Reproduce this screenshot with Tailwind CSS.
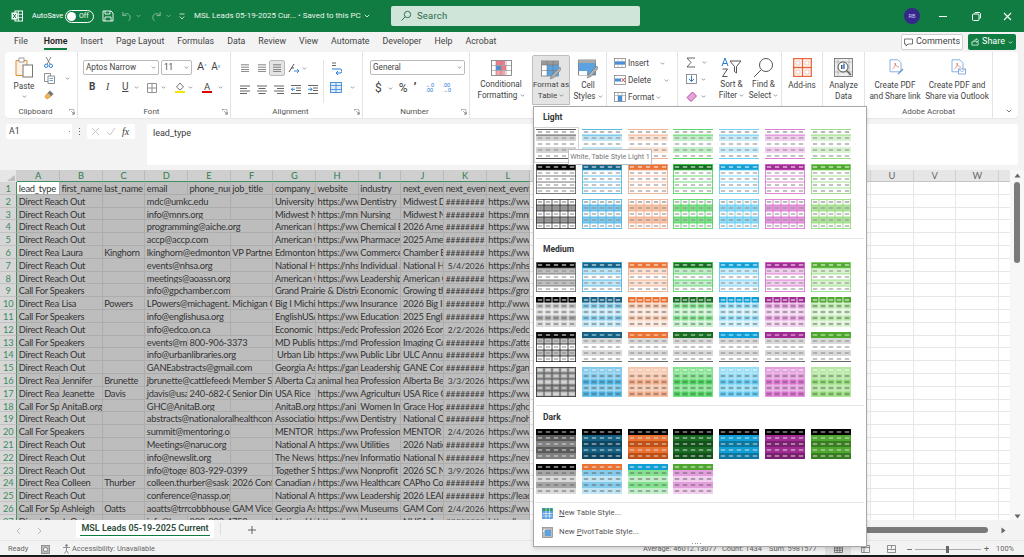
<!DOCTYPE html>
<html lang="en">
<head>
<meta charset="UTF-8">
<title>MSL Leads 05-19-2025 Current - Excel</title>
<script src="https://cdn.jsdelivr.net/npm/@tailwindcss/browser@4"></script>
</head>
<body class="relative w-[1024px] h-[557px] overflow-hidden flex flex-col bg-[#f3f3f3] text-[#3b3b3b] font-[Roboto,sans-serif]">

<svg class="hidden">
  <symbol id="chev" viewBox="0 0 6 4"><path d="M.8.8 3 3l2.2-2.2" fill="none" stroke="#666" stroke-width=".9"/></symbol>
  <symbol id="launch" viewBox="0 0 8 8"><path d="M.5.5h6v6M.5.5v2M.5.5h2" fill="none" stroke="#888" stroke-width=".8"/><path d="M3 3l3.5 3.5M4 7h3V4" fill="none" stroke="#555" stroke-width=".8"/></symbol>
  <symbol id="lines" viewBox="0 0 12 10"><path d="M1 1h10M1 4h10M1 7h10M1 9.500h10" stroke="#666" stroke-width="1" fill="none"/></symbol>
</svg>

<!-- title bar -->
<header class="h-[32px] shrink-0 flex items-center bg-[#107c41] text-white">
  <svg class="ml-[11px] w-[12px] h-[12px]" viewBox="0 0 12 12"><rect x="4" y="1" width="7.500" height="10" fill="none" stroke="#fff"/><path d="M7.500 1v10M4 4.300h7.500M4 7.600h7.500" stroke="#fff" stroke-width=".8"/><rect x=".5" y="2.500" width="6" height="7" fill="#fff"/><path d="M2 4l3 4M5 4 2 8" stroke="#107c41"/></svg>
  <span class="ml-[9px] text-[7.400px] w-[33px] whitespace-nowrap">AutoSave</span>
  <div class="w-[29px] h-[13px] rounded-full border border-white flex items-center pl-[1px]">
    <span class="w-[9px] h-[9px] rounded-full bg-white"></span><span class="ml-[3px] text-[7px]">Off</span>
  </div>
  <svg class="ml-[8px] w-[12px] h-[12px]" viewBox="0 0 12 12"><path d="M1 1h8l2 2v8H1z M3 1v3h5V1M3 11V7h6v4" fill="none" stroke="#fff" stroke-width=".9"/></svg>
  <svg class="ml-[7px] w-[11px] h-[11px] opacity-50" viewBox="0 0 12 12"><path d="M2 1v4h4M2 5c2-3 8-3 8 2 0 2-1 3-2 4" fill="none" stroke="#fff"/></svg>
  <svg class="ml-[4px] w-[5px] h-[4px] opacity-50" viewBox="0 0 6 4"><path d="M.8.8 3 3l2.200-2.200" fill="none" stroke="#fff"/></svg>
  <svg class="ml-[10px] w-[11px] h-[11px] opacity-50" viewBox="0 0 12 12"><path d="M10 1v4H6M10 5C8 2 2 2 2 7c0 2 1 3 2 4" fill="none" stroke="#fff"/></svg>
  <svg class="ml-[4px] w-[5px] h-[4px] opacity-50" viewBox="0 0 6 4"><path d="M.8.8 3 3l2.200-2.200" fill="none" stroke="#fff"/></svg>
  <svg class="ml-[8px] w-[6px] h-[7px] opacity-80" viewBox="0 0 6 7"><path d="M.5 1h5M.8 3.500 3 6l2.200-2.500" fill="none" stroke="#fff" stroke-width=".9"/></svg>
  <span class="ml-[9px] w-[197px] text-[8px] whitespace-nowrap flex items-center gap-[3px] text-[#e8f3ec]">MSL Leads 05-19-2025 Cur... &bull; Saved to this PC
    <svg class="w-[6px] h-[4px]" viewBox="0 0 6 4"><path d="M.8.8 3 3l2.200-2.200" fill="none" stroke="#fff" stroke-width=".8"/></svg>
  </span>
  <div class="w-[249px] h-[20px] bg-[#cfe5d9] rounded-[2px] flex items-center pl-[9px] text-[#2d6b4b] text-[9.500px]">
    <svg class="w-[12px] h-[12px]" viewBox="0 0 12 12"><circle cx="7.500" cy="4.500" r="3.200" fill="none" stroke="#3a7355"/><path d="M5 7 1.500 10.500" stroke="#3a7355"/></svg>
    <span class="ml-[5px] tracking-[0.2px]">Search</span>
  </div>
  <div class="ml-[264px] w-[16px] h-[16px] rounded-full bg-[#38278a] flex items-center justify-center text-[5.500px] text-[#cfc9ee]">RB</div>
  <span class="ml-[19px] w-[8px] h-[1px] bg-white"></span>
  <svg class="ml-[25px] w-[9px] h-[9px]" viewBox="0 0 9 9"><rect x=".5" y="2" width="6.500" height="6.500" rx="1" fill="none" stroke="#fff"/><path d="M2.500 1.500 3 .5h4.500l1 1V6L8 6.500" fill="none" stroke="#fff"/></svg>
  <svg class="ml-[22px] w-[9px] h-[9px]" viewBox="0 0 9 9"><path d="M1 1l7 7M8 1 1 8" stroke="#fff" stroke-width="1.100"/></svg>
</header>

<!-- ribbon tabs -->
<nav class="h-[20px] shrink-0 flex items-center text-[8.800px] text-[#444]">
  <span class="ml-[14px]">File</span>
  <span class="ml-[16px] relative font-semibold text-[#222]">Home<span class="absolute left-0 right-0 top-[13px] h-[2px] bg-[#107c41]"></span></span>
  <div class="ml-[13px] flex gap-[13px]">
    <span>Insert</span><span>Page Layout</span><span>Formulas</span><span>Data</span><span>Review</span><span>View</span><span>Automate</span><span>Developer</span><span>Help</span><span>Acrobat</span>
  </div>
  <div class="ml-auto flex items-center mr-[8px] gap-[5px]">
    <div class="w-[62px] h-[16px] bg-white border border-[#cfcfcf] rounded-[2px] flex items-center justify-center gap-[3px] text-[9px]">
      <svg class="w-[9px] h-[9px]" viewBox="0 0 9 9"><path d="M.5 1h8v5H4L2 8V6H.5z" fill="none" stroke="#555" stroke-width=".8"/></svg>Comments
    </div>
    <div class="w-[48px] h-[16px] bg-[#107c41] rounded-[2px] flex items-center justify-center gap-[3px] text-[9px] text-white">
      <svg class="w-[8px] h-[8px]" viewBox="0 0 9 9"><path d="M1 4v4h7V4M2 5c0-2 2-3 4-3V.8L8.500 3 6 5V3.600C4 3.500 3 4 2 5z" fill="none" stroke="#fff" stroke-width=".8"/></svg>Share
      <svg class="w-[5px] h-[3px]" viewBox="0 0 6 4"><path d="M.8.8 3 3l2.200-2.200" fill="none" stroke="#fff"/></svg>
    </div>
  </div>
</nav>

<!-- ribbon -->
<section class="h-[66px] shrink-0 mx-[5px] mr-[6px] bg-white rounded-[4px] flex text-[8.200px] leading-[10.500px] text-[#444] shadow-[0_1px_1px_#0000000d]">

  <!-- clipboard -->
  <div class="relative w-[73px] shrink-0 border-r border-[#e3e3e3] flex flex-col">
    <div class="flex-1 flex pt-[5px]">
      <div class="w-[36px] flex flex-col items-center pl-[2px]">
        <svg class="w-[20px] h-[21px]" viewBox="0 0 20 21"><path d="M2 3.500h11v15H2z" fill="#fdf2e4" stroke="#d98e3a"/><rect x="5" y="1" width="5" height="4" fill="#fff" stroke="#8a8a8a" stroke-width=".8"/><rect x="9" y="8" width="9.500" height="12" fill="#fff" stroke="#777"/></svg>
        <span class="mt-[3px]">Paste</span>
        <svg class="w-[5px] h-[3px] mt-[3px]"><use href="#chev"/></svg>
      </div>
      <div class="flex flex-col gap-[5px] ml-[3px]">
        <svg class="w-[9px] h-[11px]" viewBox="0 0 9 11"><path d="M2 0l4 7M7 0 3 7" stroke="#666" stroke-width=".8"/><circle cx="2.200" cy="8.800" r="1.700" fill="none" stroke="#2b7cd3"/><circle cx="6.800" cy="8.800" r="1.700" fill="none" stroke="#2b7cd3"/></svg>
        <div class="flex items-center"><svg class="w-[11px] h-[11px]" viewBox="0 0 11 11"><path d="M.5.500h6v8h-6z" fill="#fff" stroke="#777" stroke-width=".8"/><path d="M4 3h6.500v7.500H4z" fill="#fff" stroke="#777" stroke-width=".8"/><path d="M5.500 5.500h3.500M5.500 7.500h3.500" stroke="#2b7cd3" stroke-width=".7"/></svg><svg class="w-[5px] h-[3px] ml-[10px]"><use href="#chev"/></svg></div>
        <svg class="w-[11px] h-[11px]" viewBox="0 0 11 11"><path d="M6 1.500 9.500 5 7 7.500l-3.500-3.500z" fill="#777"/><path d="M3.500 4 .8 8l2 2L7 7.500" fill="#f2b25a" stroke="#d98e3a" stroke-width=".7"/></svg>
      </div>
    </div>
    <div class="h-[13px] text-center text-[8px] leading-[14px] text-[#555] pr-[11px]">Clipboard</div>
    <svg class="absolute right-[2px] bottom-[3px] w-[6px] h-[6px]"><use href="#launch"/></svg>
  </div>

  <!-- font -->
  <div class="relative w-[153px] shrink-0 border-r border-[#e3e3e3] flex flex-col pl-[5px]">
    <div class="flex items-center mt-[8px]">
      <div class="w-[76px] h-[15px] border border-[#bbb] rounded-[2px] flex items-center justify-between px-[2px]">Aptos Narrow<svg class="w-[5px] h-[3px]"><use href="#chev"/></svg></div>
      <div class="ml-[2px] w-[31px] h-[15px] border border-[#bbb] rounded-[2px] flex items-center justify-between px-[2px]">11<svg class="w-[5px] h-[3px]"><use href="#chev"/></svg></div>
      <span class="ml-[5px] text-[11px]">A<sup class="text-[5px] text-[#2b7cd3]">^</sup></span>
      <span class="ml-[5px] text-[10px]">A<sup class="text-[5px] text-[#2b7cd3]">v</sup></span>
    </div>
    <div class="flex items-center mt-[5px] h-[15px] text-[10px]">
      <span class="ml-[6px] w-[17px] font-bold">B</span>
      <span class="w-[16px] italic font-[Liberation_Serif,serif]">I</span>
      <span class="w-[12px] underline">U</span><svg class="w-[5px] h-[3px]"><use href="#chev"/></svg>
      <svg class="ml-[8px] w-[10px] h-[10px]" viewBox="0 0 10 10"><path d="M.5.500h9v9h-9zM5 .5v9M.5 5h9" fill="none" stroke="#777" stroke-width=".8"/></svg>
      <svg class="ml-[4px] w-[5px] h-[3px]"><use href="#chev"/></svg>
      <div class="ml-[9px] flex flex-col items-center"><svg class="w-[10px] h-[9px]" viewBox="0 0 10 9"><path d="M1.500 5 5 1l3.500 4L5 8z" fill="none" stroke="#555" stroke-width=".8"/></svg><span class="w-[10px] h-[2px] bg-[#f5e20a]"></span></div>
      <svg class="ml-[3px] w-[5px] h-[3px]"><use href="#chev"/></svg>
      <div class="ml-[9px] flex flex-col items-center leading-[9px] text-[9.500px]">A<span class="w-[10px] h-[2px] bg-[#e00000]"></span></div>
      <svg class="ml-[6px] w-[5px] h-[3px]"><use href="#chev"/></svg>
    </div>
    <div class="mt-auto h-[13px] text-center text-[8px] leading-[14px] text-[#555] pr-[10px]">Font</div>
    <svg class="absolute right-[2px] bottom-[3px] w-[6px] h-[6px]"><use href="#launch"/></svg>
  </div>

  <!-- alignment -->
  <div class="relative w-[132px] shrink-0 border-r border-[#e3e3e3] flex flex-col">
    <div class="flex flex-1 pt-[8px]">
      <div class="w-[93px] border-r border-[#e3e3e3] mb-[2px] pl-[9px]">
        <div class="flex items-center h-[16px]">
          <svg class="w-[10px] h-[8px]"><use href="#lines"/></svg>
          <svg class="ml-[7px] w-[10px] h-[8px]"><use href="#lines"/></svg>
          <div class="ml-[2px] w-[16px] h-[16px] bg-[#e4e4e4] border border-[#bbb] rounded-[2px] flex items-center justify-center"><svg class="w-[10px] h-[8px]"><use href="#lines"/></svg></div>
          <svg class="ml-[3px] w-[12px] h-[11px]" viewBox="0 0 12 11"><path d="M1 9 6 1M3 5h3" stroke="#555" fill="none"/><path d="M6 8h5M9 6l2 2-2 2" stroke="#2b7cd3" fill="none" stroke-width=".9"/></svg>
          <svg class="ml-[2px] w-[5px] h-[3px]"><use href="#chev"/></svg>
        </div>
        <div class="flex items-center gap-[7px] mt-[9px]">
          <svg class="w-[10px] h-[9px]" viewBox="0 0 10 9"><path d="M0 1h10M0 3.500h7M0 6h10M0 8.500h7" stroke="#666"/></svg>
          <svg class="w-[10px] h-[9px]" viewBox="0 0 10 9"><path d="M0 1h10M1.500 3.500h7M0 6h10M1.500 8.500h7" stroke="#666"/></svg>
          <svg class="w-[10px] h-[9px]" viewBox="0 0 10 9"><path d="M0 1h10M3 3.500h7M0 6h10M3 8.500h7" stroke="#666"/></svg>
          <svg class="w-[10px] h-[9px]" viewBox="0 0 10 9"><path d="M0 .5h10M5 3h5M5 5.500h5M0 8.500h10" stroke="#666"/><path d="M4 4.300H0M2 2.500.5 4.300 2 6" stroke="#2b7cd3" fill="none" stroke-width=".9"/></svg>
          <svg class="w-[10px] h-[9px]" viewBox="0 0 10 9"><path d="M0 .5h10M5 3h5M5 5.500h5M0 8.500h10" stroke="#666"/><path d="M0 4.300h4M2.500 2.500 4 4.300 2.500 6" stroke="#2b7cd3" fill="none" stroke-width=".9"/></svg>
        </div>
      </div>
      <div class="pl-[6px] flex flex-col">
        <svg class="ml-[1px] mt-[2px] w-[11px] h-[13px]" viewBox="0 0 11 13"><path d="M1 1h4M1 3.500h4" stroke="#666"/><path d="M1 7h8a1.500 1.500 0 0 1 0 4H5M7 9 5 11l2 2" fill="none" stroke="#2b7cd3"/></svg>
        <div class="flex items-center mt-[7px]"><svg class="w-[12px] h-[11px]" viewBox="0 0 12 11"><rect x=".5" y=".5" width="11" height="10" fill="#dcecf9" stroke="#2b7cd3" stroke-width=".8"/><path d="M.5 3.500h11M.5 7.500h11M6 .5v10" stroke="#2b7cd3" stroke-width=".7"/></svg><svg class="ml-[8px] w-[5px] h-[3px]"><use href="#chev"/></svg></div>
      </div>
    </div>
    <div class="h-[13px] text-center text-[8px] leading-[14px] text-[#555] pr-[12px]">Alignment</div>
    <svg class="absolute right-[2px] bottom-[3px] w-[6px] h-[6px]"><use href="#launch"/></svg>
  </div>

  <!-- number -->
  <div class="relative w-[107px] shrink-0 border-r border-[#e3e3e3] flex flex-col pl-[7px]">
    <div class="mt-[8px] w-[95px] h-[15px] border border-[#bbb] rounded-[2px] flex items-center justify-between px-[2px]">General<svg class="w-[5px] h-[3px]"><use href="#chev"/></svg></div>
    <div class="flex items-center mt-[6px] h-[14px] text-[#444]">
      <span class="ml-[5px] text-[12px] leading-[12px]">$</span>
      <svg class="ml-[6px] w-[5px] h-[3px]"><use href="#chev"/></svg>
      <span class="ml-[6px] text-[12px] leading-[12px]">%</span>
      <span class="ml-[6px] text-[13px] leading-[12px] font-bold">&#8217;</span>
      <div class="ml-[9px] w-[11px] text-[5.500px] leading-[5.500px] text-[#2b7cd3]">&#8592;0<br>.00</div>
      <div class="ml-[6px] w-[11px] text-[5.500px] leading-[5.500px] text-[#2b7cd3]">.00<br>&#8594;0</div>
    </div>
    <div class="mt-auto h-[13px] text-center text-[8px] leading-[14px] text-[#555] pr-[10px]">Number</div>
    <svg class="absolute right-[2px] bottom-[3px] w-[6px] h-[6px]"><use href="#launch"/></svg>
  </div>

  <!-- styles -->
  <div class="w-[137px] shrink-0 border-r border-[#e3e3e3] flex">
    <div class="w-[62px] flex flex-col items-center pt-[8px]">
      <svg class="w-[21px] h-[16px]" viewBox="0 0 21 16"><rect x=".5" y=".5" width="20" height="15" fill="#fff" stroke="#777" stroke-width=".8"/><rect x="5" y="1" width="9" height="4" fill="#f07a88"/><rect x="5" y="5.500" width="5" height="4.500" fill="#4a90d9"/><rect x="10" y="5.500" width="5" height="4.500" fill="#f07a88"/><rect x="5" y="10.500" width="9" height="4.500" fill="#f5a0aa"/><path d="M5 .5v15M10 .5v15M15 .5v15M.5 5.500h20M.5 10.500h20" stroke="#888" stroke-width=".6"/></svg>
      <span class="mt-[3px] text-center">Conditional<br>Formatting <svg class="inline w-[5px] h-[3px]"><use href="#chev"/></svg></span>
    </div>
    <div class="w-[38px] h-[50px] mt-[3px] bg-[#e4e4e4] border border-[#bdbdbd] rounded-t-[2px] flex flex-col items-center pt-[4px] whitespace-nowrap">
      <svg class="w-[20px] h-[20px]" viewBox="0 0 20 20"><rect x=".5" y="1" width="17" height="15" fill="#fff" stroke="#777" stroke-width=".8"/><rect x=".5" y="1" width="17" height="4" fill="#999"/><rect x="6" y="5" width="12" height="11" fill="#5ba3e0"/><path d="M6 1v15M12 1v15M.5 5h17M.5 10.500h17" stroke="#777" stroke-width=".6"/><path d="M19 7 11 15l-2 4 4-1.500 7-8z" fill="#b0b0b0" stroke="#666" stroke-width=".5"/></svg>
      <span class="text-center text-[8px]">Format as<br>Table <svg class="inline w-[5px] h-[3px]"><use href="#chev"/></svg></span>
    </div>
    <div class="w-[36px] flex flex-col items-center pt-[7px]">
      <svg class="w-[20px] h-[20px]" viewBox="0 0 20 20"><rect x=".5" y="1" width="17" height="15" fill="#5ba3e0" stroke="#777" stroke-width=".8"/><rect x=".5" y="1" width="17" height="3" fill="#aaa"/><rect x="1" y="12" width="8" height="4" fill="#fff"/><path d="M19 7 11 15l-2 4 4-1.500 7-8z" fill="#b0b0b0" stroke="#666" stroke-width=".5"/></svg>
      <span class="mt-[1px] text-center">Cell<br>Styles <svg class="inline w-[5px] h-[3px]"><use href="#chev"/></svg></span>
    </div>
  </div>

  <!-- cells -->
  <div class="w-[71px] shrink-0 border-r border-[#e3e3e3] flex flex-col pl-[7px] pt-[5px] gap-[5px]">
    <div class="flex items-center h-[12px]"><svg class="w-[12px] h-[10px]" viewBox="0 0 12 10"><rect x=".5" y=".5" width="11" height="9" fill="#fff" stroke="#777" stroke-width=".7"/><path d="M.5 3.500h11M.5 6.500h11M4 .5v9M8 .5v9" stroke="#aaa" stroke-width=".5"/><rect x="1" y="3.500" width="10" height="3" fill="#4a90d9"/></svg><span class="ml-[2px] w-[32px]">Insert</span><svg class="w-[5px] h-[3px]"><use href="#chev"/></svg></div>
    <div class="flex items-center h-[12px]"><svg class="w-[12px] h-[10px]" viewBox="0 0 12 10"><rect x=".5" y=".5" width="11" height="9" fill="#fff" stroke="#777" stroke-width=".7"/><rect x="1" y="3.500" width="6" height="3" fill="#4a90d9"/><path d="M7.500 3l3.500 4M11 3 7.500 7" stroke="#d13438" stroke-width=".9"/></svg><span class="ml-[2px] w-[36px]">Delete</span><svg class="w-[5px] h-[3px]"><use href="#chev"/></svg></div>
    <div class="flex items-center h-[12px]"><svg class="w-[12px] h-[10px]" viewBox="0 0 12 10"><rect x=".5" y=".5" width="11" height="9" fill="#fff" stroke="#777" stroke-width=".7"/><path d="M4 .5v9M8 .5v9M.5 3.500h11" stroke="#888" stroke-width=".5"/><rect x="4" y="3.500" width="4" height="6" fill="#4a90d9"/></svg><span class="ml-[2px]">Format</span><svg class="ml-[2px] w-[5px] h-[3px]"><use href="#chev"/></svg></div>
  </div>

  <!-- editing -->
  <div class="w-[104px] shrink-0 border-r border-[#e3e3e3] flex">
    <div class="w-[37px] pl-[8px] pt-[4px] flex flex-col gap-[5px]">
      <div class="flex items-center h-[12px]"><svg class="w-[10px] h-[11px]" viewBox="0 0 10 11"><path d="M9 1H1l4 4.500L1 10h8" fill="none" stroke="#555" stroke-width=".9"/></svg><svg class="ml-[6px] w-[5px] h-[3px]"><use href="#chev"/></svg></div>
      <div class="flex items-center h-[12px]"><svg class="w-[11px] h-[10px]" viewBox="0 0 11 10"><rect x=".5" y=".5" width="10" height="9" fill="none" stroke="#777" stroke-width=".8"/><path d="M5.500 1.500v6M3 5l2.500 2.500L8 5" fill="none" stroke="#2b7cd3"/></svg><svg class="ml-[4px] w-[5px] h-[3px]"><use href="#chev"/></svg></div>
      <div class="flex items-center h-[12px]"><svg class="w-[11px] h-[11px]" viewBox="0 0 11 11"><path d="M6.500 1 10.500 5 5 10.500 1 6.500z" fill="#e3a5dc" stroke="#a02b93" stroke-width=".8"/></svg><svg class="ml-[4px] w-[5px] h-[3px]"><use href="#chev"/></svg></div>
    </div>
    <div class="w-[33px] flex flex-col items-center pt-[5px]">
      <svg class="w-[21px] h-[21px]" viewBox="0 0 21 21"><path d="M1 9 4 1l3 8M2 6.500h4" fill="none" stroke="#2b7cd3"/><path d="M1.500 12h5L1.500 19.500h5" fill="none" stroke="#555"/><path d="M9 4h11l-4.500 5.500V16l-2-1.500v-5z" fill="none" stroke="#555"/></svg>
      <span class="mt-[1px] text-center whitespace-nowrap">Sort &amp;<br>Filter <svg class="inline w-[5px] h-[3px]"><use href="#chev"/></svg></span>
    </div>
    <div class="w-[31px] flex flex-col items-center pt-[5px]">
      <svg class="w-[21px] h-[21px]" viewBox="0 0 21 21"><circle cx="13" cy="8" r="6.500" fill="none" stroke="#555"/><path d="M8 13 1 20" stroke="#555"/></svg>
      <span class="mt-[1px] text-center whitespace-nowrap">Find &amp;<br>Select <svg class="inline w-[5px] h-[3px]"><use href="#chev"/></svg></span>
    </div>
  </div>

  <!-- add-ins -->
  <div class="w-[41px] shrink-0 border-r border-[#e3e3e3] flex flex-col items-center pt-[6px]">
    <svg class="w-[19px] h-[19px]" viewBox="0 0 19 19"><path d="M.7.7h17.600v17.600H.7zM9.500.7v17.600M.7 9.500h17.600" fill="none" stroke="#e8663c" stroke-width="1.300"/><path d="M3 3h4v4H3zM12 3h4v4h-4zM3 12h4v4H3zM12 12h4v4h-4z" fill="none" stroke="#f2a98a" stroke-width=".6"/></svg>
    <span class="mt-[3px]">Add-ins</span>
  </div>

  <!-- analyze -->
  <div class="w-[42px] shrink-0 border-r border-[#e3e3e3] flex flex-col items-center pt-[6px]">
    <svg class="w-[19px] h-[19px]" viewBox="0 0 19 19"><rect x=".5" y=".5" width="18" height="18" fill="#eee" stroke="#666" stroke-width=".8"/><path d="M.5 4h18M.5 14h18M4 .5v18M15 .5v18" stroke="#999" stroke-width=".6"/><circle cx="9" cy="9" r="5" fill="#fff" stroke="#555"/><rect x="7" y="7" width="1.500" height="4" fill="#555"/><rect x="9.200" y="5.500" width="1.500" height="5.500" fill="#2b7cd3"/><path d="M12.500 12.500l4.500 4.500" stroke="#555" stroke-width="1.300"/></svg>
    <span class="mt-[3px] text-center">Analyze<br>Data</span>
  </div>

  <!-- adobe -->
  <div class="w-[128px] shrink-0 border-r border-[#e3e3e3] flex flex-col">
    <div class="flex-1 flex pt-[7px]">
      <div class="w-[60px] flex flex-col items-center whitespace-nowrap">
        <svg class="w-[15px] h-[17px] ml-[2px]" viewBox="0 0 15 17"><path d="M1 .8h8l3 3v9H1z" fill="#fff" stroke="#7aa7dc" stroke-width=".9"/><path d="M3.500 10c2-1 3-4 2.500-6 .5 3 2 4 4 4" fill="none" stroke="#c7553a" stroke-width=".6"/><path d="M9 15l5-5" stroke="#6b9bd6" stroke-width="1.500"/></svg>
        <span class="mt-[4px] text-center">Create PDF<br>and Share link</span>
      </div>
      <div class="w-[64px] flex flex-col items-center whitespace-nowrap">
        <svg class="w-[15px] h-[17px] ml-[2px]" viewBox="0 0 15 17"><path d="M1 .8h8l3 3v9H1z" fill="#fff" stroke="#7aa7dc" stroke-width=".9"/><path d="M3.500 10c2-1 3-4 2.500-6 .5 3 2 4 4 4" fill="none" stroke="#c7553a" stroke-width=".6"/><rect x="7.500" y="10" width="7" height="5" fill="#fff" stroke="#6b9bd6" stroke-width=".8"/><path d="M7.500 10l3.500 3 3.500-3" fill="none" stroke="#6b9bd6" stroke-width=".6"/></svg>
        <span class="mt-[4px] text-center">Create PDF and<br>Share via Outlook</span>
      </div>
    </div>
    <div class="h-[13px] text-center text-[8px] leading-[14px] text-[#555]">Adobe Acrobat</div>
  </div>

  <div class="flex-1 flex items-end justify-end pb-[5px] pr-[6px]"><svg class="w-[6px] h-[4px]"><use href="#chev"/></svg></div>
</section>

<!-- formula bar -->
<div class="h-[52px] shrink-0 flex items-start pt-[6px] pl-[6px] pr-[6px]">
  <div class="w-[66px] h-[15px] bg-white rounded-[2px] flex items-center justify-between pl-[3px] pr-[2px] text-[8.700px]">A1<span class="w-[1.500px] h-[1.500px] bg-[#666] rounded-full"></span></div>
  <div class="w-[15px] h-[15px] flex flex-col items-center justify-center gap-[1.500px]"><span class="w-[1.500px] h-[1.500px] bg-[#666]"></span><span class="w-[1.500px] h-[1.500px] bg-[#666]"></span><span class="w-[1.500px] h-[1.500px] bg-[#666]"></span></div>
  <div class="w-[48px] h-[15px] bg-white rounded-[2px] flex items-center pl-[4px]">
    <svg class="w-[9px] h-[9px]" viewBox="0 0 9 9"><path d="M1 1l7 7M8 1 1 8" stroke="#c8c8c8"/></svg>
    <svg class="ml-[6px] w-[10px] h-[9px]" viewBox="0 0 10 9"><path d="M1 5l3 3 5-7" fill="none" stroke="#c8c8c8"/></svg>
    <span class="ml-[6px] italic text-[10px] font-[Liberation_Serif,serif]">fx</span>
  </div>
  <div class="ml-[12px] flex-1 h-[41px] bg-white rounded-[2px] pl-[6px] pt-[3px] text-[9px]">lead_type</div>
</div>

<!-- sheet -->
<div class="h-[350px] shrink-0 flex overflow-hidden bg-white">
  <div id="grid" class="w-[1010px] shrink-0 overflow-hidden font-[Lato,sans-serif] text-[9.300px] tracking-[-0.25px] leading-[14.400px]"></div>
  <div class="flex-1 bg-[#f7f7f7] relative">
    <svg class="absolute left-[4px] top-[3px] w-[7px] h-[5px]" viewBox="0 0 7 5"><path d="M3.500.5 6.500 4.500h-6z" fill="#666"/></svg>
    <div class="absolute left-[4px] top-[12px] w-[6px] h-[81px] rounded-full bg-[#7a7a7a]"></div>
    <svg class="absolute left-[4px] top-[344px] w-[7px] h-[5px]" viewBox="0 0 7 5"><path d="M3.500 4.500 6.500.5h-6z" fill="#666"/></svg>
  </div>
</div>

<!-- sheet tabs -->
<div class="h-[20px] shrink-0 flex items-start bg-[#f3f3f3]">
  <svg class="ml-[16px] mt-[7px] w-[5px] h-[8px]" viewBox="0 0 5 8"><path d="M4 1 1 4l3 3" fill="none" stroke="#bbb"/></svg>
  <svg class="ml-[16px] mt-[7px] w-[5px] h-[8px]" viewBox="0 0 5 8"><path d="M1 1l3 3-3 3" fill="none" stroke="#bbb"/></svg>
  <div class="ml-[34px] w-[138px] h-[18px] bg-white flex flex-col items-center justify-center rounded-b-[2px]">
    <span class="text-[9px] font-semibold text-[#2b4a38] leading-[13px] whitespace-nowrap">MSL Leads 05-19-2025 Current</span>
    <span class="w-[130px] h-[1.500px] bg-[#107c41]"></span>
  </div>
  <span class="ml-[6px] mt-[3px] h-[12px] w-px bg-[#ddd]"></span>
  <svg class="ml-[27px] mt-[6px] w-[8px] h-[8px]" viewBox="0 0 8 8"><path d="M4 0v8M0 4h8" stroke="#555" stroke-width=".9"/></svg>
  <span class="ml-[284px] mt-[7px] w-[448px] h-[6px] rounded-full bg-[#7a7a7a]"></span>
  <svg class="ml-[13px] mt-[7px] w-[5px] h-[7px]" viewBox="0 0 5 7"><path d="M.5.5 4.500 3.500.5 6.500z" fill="#666"/></svg>
</div>

<!-- status bar -->
<footer class="h-[15px] shrink-0 flex items-center pt-[2px] whitespace-nowrap text-[7.400px] text-[#666] bg-[#f3f3f3] border-t border-[#e6e6e6]">
  <span class="ml-[8px] w-[33px]">Ready</span>
  <svg class="w-[9px] h-[9px]" viewBox="0 0 9 9"><rect x=".5" y=".5" width="8" height="8" fill="#bbb" stroke="#777" stroke-width=".7"/><circle cx="4.500" cy="4.500" r="2" fill="#fff" stroke="#555" stroke-width=".6"/></svg>
  <svg class="ml-[12px] w-[9px] h-[10px]" viewBox="0 0 9 10"><circle cx="4.500" cy="1.500" r="1.200" fill="#777"/><path d="M1 3.500h7M4.500 3.500v3L2.500 9.500M4.500 6.500l2 3" fill="none" stroke="#777" stroke-width=".8"/></svg>
  <span class="ml-[1px] w-[77px]">Accessibility: Unavailable</span>
  <span class="ml-[494px] w-[68px]">Average: 46012.13077</span>
  <span class="ml-[11px] w-[36px]">Count: 1434</span>
  <span class="ml-[11px] w-[44px]">Sum: 5981577</span>
  <div class="ml-[12px] w-[26px] h-[13px] bg-[#e1e1e1] flex items-center justify-center"><svg class="w-[9px] h-[8px]" viewBox="0 0 9 8"><path d="M.5.5h8v7h-8zM3.200.5v7M5.800.5v7M.5 3h8M.5 5.300h8" fill="none" stroke="#555" stroke-width=".7"/></svg></div>
  <svg class="ml-[10px] w-[9px] h-[8px]" viewBox="0 0 9 8"><path d="M.5.500h8v7h-8zM.5 2.500h8M3 2.500v5" fill="none" stroke="#666" stroke-width=".7"/></svg>
  <svg class="ml-[17px] w-[9px] h-[8px]" viewBox="0 0 9 8"><path d="M.5.500h8v7h-8zM4.500.5v3M.5 4.500h8" fill="none" stroke="#666" stroke-width=".7"/></svg>
  <span class="ml-[11px] w-[5px] h-px bg-[#777]"></span>
  <div class="ml-[3px] w-[66px] h-px bg-[#aaa] relative"><span class="absolute left-[31px] top-[-3px] w-[3px] h-[7px] bg-[#666]"></span></div>
  <span class="ml-[3px] text-[9px] leading-[9px]">+</span>
  <span class="ml-[7px]">100%</span>
</footer>
<div class="flex-1 bg-[#1b1b1b]"></div>

<!-- format as table gallery -->
<div class="absolute left-[533px] top-[106px] w-[334px] h-[441px] bg-white border border-[#a8a8a8] shadow-[0_2px_4px_#00000026] text-[#333] text-[8.700px]">
  <div class="h-[22px] pl-[9px] pt-[5px] font-bold leading-[10px] text-[8.500px]">Light</div>
  <div id="light" class="ml-[2px] grid grid-cols-[repeat(7,40px)] gap-x-[5.800px] gap-y-[5px]"></div>
  <div class="mx-[2px] mt-[9px] h-px bg-[#e4e4e4]"></div>
  <div class="h-[23px] pl-[9px] pt-[5px] font-bold leading-[10px] text-[8.500px]">Medium</div>
  <div id="medium" class="ml-[2px] grid grid-cols-[repeat(7,40px)] gap-x-[5.800px] gap-y-[5px]"></div>
  <div class="mx-[2px] mt-[8px] h-px bg-[#e4e4e4]"></div>
  <div class="h-[23px] pl-[9px] pt-[6px] font-bold leading-[10px] text-[8.500px]">Dark</div>
  <div id="dark" class="ml-[2px] grid grid-cols-[repeat(7,40px)] gap-x-[5.800px] gap-y-[5px]"></div>
  <div class="mx-[2px] mt-[8px] h-px bg-[#e4e4e4]"></div>
  <div class="mt-[3px] h-[14px] flex items-center pl-[8px] text-[7.900px] text-[#555]">
    <svg class="w-[11px] h-[11px]" viewBox="0 0 11 11"><rect x=".5" y=".5" width="10" height="10" fill="#5ba3e0" stroke="#2b7cd3" stroke-width=".6"/><rect x=".5" y=".5" width="10" height="2.500" fill="#2e9a5e"/><path d="M.5 5.500h10M.5 8h10M4 .5v10M7.500 .5v10" stroke="#fff" stroke-width=".6"/></svg>
    <span class="ml-[6px]"><span class="underline">N</span>ew Table Style...</span>
  </div>
  <div class="mt-[5px] h-[14px] flex items-center pl-[8px] text-[7.900px] text-[#555]">
    <svg class="w-[11px] h-[11px]" viewBox="0 0 11 11"><rect x=".5" y=".5" width="10" height="10" fill="#bbb" stroke="#777" stroke-width=".6"/><rect x="3" y="3" width="6" height="6" fill="#5ba3e0"/><path d="M3 2a3 3 0 0 0-1.500 3" fill="none" stroke="#fff"/></svg>
    <span class="ml-[6px]">New <span class="underline">P</span>ivotTable Style...</span>
  </div>
  <div class="absolute left-[158px] bottom-[2px] flex gap-[1.500px]"><span class="w-px h-px bg-[#999]"></span><span class="w-px h-px bg-[#999]"></span><span class="w-px h-px bg-[#999]"></span><span class="w-px h-px bg-[#999]"></span></div>
  <!-- hovered thumbnail and tooltip -->
  <div class="absolute left-[0px] top-[20px] w-[45px] h-[36px] border border-[#d4d4d4]"></div>
  <div class="absolute left-[34px] top-[42px] w-[84px] h-[16px] bg-white border border-[#bdbdbd] flex items-center justify-center text-[7.200px] text-[#777] whitespace-nowrap">White, Table Style Light 1</div>
</div>

<script>
// cell data, one array per row, columns A..L
const H = '########';
const DR = 'Direct Reach Out', CS = 'Call For Speakers';
const rows = [
  ['lead_type','first_name','last_name','email','phone_number','job_title','company_name','website','industry','next_event','next_event','next_event'],
  [DR,'','','mdc@umkc.edu','','','University of Mis','https://www','Dentistry','Midwest Dental',H,'https://www'],
  [DR,'','','info@mnrs.org','','','Midwest Nursing','https://mnrs','Nursing','Midwest Nursing',H,'https://mnrs'],
  [DR,'','','programming@aiche.org','','','American Institute','https://www','Chemical Eng','2026 American',H,'https://www'],
  [DR,'','','accp@accp.com','','','American College','https://www','Pharmacey','2025 American',H,'https://www'],
  [DR,'Laura','Kinghorn','lkinghorn@edmontonchamber','','VP Partnerships','Edmonton Chamber','https://www','Commerce','Chamber Event',H,'https://www'],
  [DR,'','','events@nhsa.org','','','National Head','https://nhsa','Individual and','National Head','5/4/2026','https://nhsa-'],
  [DR,'','','meetings@aoassn.org','','','American Osteo','https://www','Leadership','American Osteo',H,'https://www'],
  [CS,'','','info@gpchamber.com','','','Grand Prairie & District','','Economic','Growing the',H,'https://grow'],
  [DR,'Lisa','Powers','LPowers@michagent.org','','Michigan C','Big I Michigan','https://www','Insurance','2026 Big I Mi',H,'http://www'],
  [CS,'','','info@englishusa.org','','','EnglishUSA','https://www','Education','2025 English',H,'https://ww'],
  [DR,'','','info@edco.on.ca','','','Economic','https://edco','Profession','2026 Econ','2/2/2026','https://edc'],
  [CS,'','','events@mdpub.com','800-906-3373','','MD Publish','https://md','Profession','Imaging Con',H,'https://atte'],
  [DR,'','','info@urbanlibraries.org','','',' Urban Libr','https://www','Public Libr','ULC Annual',H,'https://www'],
  [DR,'','','GANEabstracts@gmail.com','','','Georgia Assoc','https://gan','Leadership','GANE Conf',H,'https://gan'],
  [DR,'Jennifer','Brunette','jbrunette@cattlefeeders','','Member Services','Alberta Cattle','animal health','Profession','Alberta Beef','3/3/2026','https://www'],
  [DR,'Jeanette','Davis','jdavis@usarice.com','240-682-0000','Senior Director','USA Rice','https://www','Agriculture','USA Rice C',H,'https://www'],
  [CS,'AnitaB.org','','GHC@AnitaB.org','','','AnitaB.org','https://ani','Women In Tech','Grace Hopper',H,'https://ghc'],
  [DR,'','','abstracts@nationaloralhealthconference','','','Association','https://www','Dentistry','National Oral',H,'https://noh'],
  [CS,'','','summit@mentoring.org','','','MENTOR N','https://www','Profession','MENTOR s','2/4/2026','https://ww'],
  [DR,'','','Meetings@naruc.org','','','National As','https://www','Utilities','2026 Nation',H,'https://www'],
  [DR,'','','info@newslit.org','','','The News Lit','https://new','Information','National New',H,'https://new'],
  [DR,'','','info@togetherSC','803-929-0399','','Together SC','https://www','Nonprofit (','2026 SC No','3/9/2026','https://www'],
  [DR,'Colleen','Thurber','colleen.thurber@sask','','2026 Confer','Canadian A','https://www','Healthcare','CAPho Conf',H,'https://www'],
  [DR,'','','conference@nassp.org','','','National As','https://www','Leadership','2026 LEAD',H,'https://lead'],
  [CS,'Ashleigh','Oatts','aoatts@trrcobbhouse','','GAM Vice Pr','Georgia As','https://www','Museums a','GAM Confe','2/4/2026','https://ww'],
  [DR,'','','info@hunger.org','888-888-4758','','National Hu','https://www','Hunger','NHSA Ann',H,'https://www']
];
const letters = 'ABCDEFGHIJKLMNOPQRSTUVWX'.split('');

const grid = document.getElementById('grid');
let html = '<div class="flex h-[12px]"><div class="w-[17.300px] shrink-0 bg-[#e6e6e6] border-r border-[#cfcfcf] flex items-end justify-end"><svg class="w-[10px] h-[8px]" viewBox="0 0 10 8"><path d="M9 1v6H1z" fill="#bdbdbd"/></svg></div>';
letters.forEach((l, i) => {
  const sel = i < 12;
  html += '<div class="w-[42.700px] shrink-0 text-center leading-[12px] border-r ' + (sel ? 'bg-[#cfcfcf] border-[#bababa] text-[#2e7d50] border-b-[1px] border-b-[#3f8f63]' : 'bg-[#e6e6e6] border-[#cfcfcf] text-[#666] border-b-[1px] border-b-[#c4c4c4]') + '">' + l + '</div>';
});
grid.innerHTML = html + '</div>';

rows.forEach((row, r) => {
  let line = '<div class="flex h-[12.800px]"><div class="w-[17.300px] shrink-0 overflow-hidden bg-[#d6d6d6] border-r border-r-[#3f8f63] border-b border-b-[#c2c2c2] text-center text-[#3d8a5f]">' + (r + 1) + '</div><div class="grid grid-cols-[repeat(24,42.700px)]">';
  for (let c = 0; c < 12; c++) {
    const t = row[c];
    let span = 1;
    if (t.length > 10 && t !== H) {
      const want = Math.ceil(t.length * 4.2 / 42.7);
      while (span < want && c + span < 12 && row[c + span] === '') span++;
    }
    const first = r === 0 && c === 0;
    const isDate = /^\d+\/\d+\/\d+$/.test(t) || t === H;
    const cls = 'h-[12.800px] overflow-hidden whitespace-pre px-[1.500px] border-r border-b border-[#adadad] text-[#333] '
      + (first ? 'bg-white' : 'bg-[#bdbdbd]') + (isDate ? ' text-right text-[8.400px] tracking-normal' : '');
    line += '<div class="' + cls + '" style="grid-column:span ' + span + '">' + t.replace('&', '&amp;') + '</div>';
    c += span - 1;
  }
  for (let c = 12; c < 24; c++) line += '<div class="h-[12.800px] border-r border-b border-[#e7e7e7]"></div>';
  grid.insertAdjacentHTML('beforeend', line + '</div></div>');
});

// table style thumbnails
const accent = ['#000000','#156082','#e97132','#196b24','#0f9ed5','#a02b93','#4ea72e'];
const t40 = ['#7f7f7f','#45b0e1','#f1a983','#47d359','#60caf3','#d86dcd','#8ed973'];
const t60 = ['#a6a6a6','#83caeb','#f6c6ad','#83e28e','#95dcf7','#e49edd','#b3e5a1'];
const t80 = ['#d9d9d9','#c0e6f5','#fbe3d6','#c1f0c8','#caedfb','#f2ceef','#d9f2d0'];
const dark = ['#404040','#0e4560','#c04f15','#124f1a','#0b769f','#7a206f','#3a7c22'];

function thumb(o) {
  let s = '<svg class="w-[40px] h-[30px]" viewBox="0 0 40 30">';
  const rect = (x, y, w, h, f) => '<rect x="' + x + '" y="' + y + '" width="' + w + '" height="' + h + '" fill="' + f + '"/>';
  (o.bands || []).forEach((b, i) => { if (b) s += rect(0, 6 * (i + 1), 40, 6, b); });
  if (o.head) s += rect(0, 0, 40, 6, o.head);
  if (o.hline) for (let i = 1; i < 5; i++) s += rect(0, 6 * i - .4, 40, .8, o.hline);
  if (o.vline) for (let i = 1; i < 5; i++) s += rect(8 * i - .4, o.vtop || 0, .8, 30 - (o.vtop || 0), o.vline);
  if (o.headV) for (let i = 1; i < 5; i++) s += rect(8 * i - .4, 0, .8, 6, o.headV);
  if (o.top) s += rect(0, 0, 40, .9, o.top);
  if (o.under) s += rect(0, 5.600, 40, .9, o.under);
  if (o.bottom) s += rect(0, 29.100, 40, .9, o.bottom);
  if (o.box) s += '<rect x=".4" y=".4" width="39.200" height="29.200" fill="none" stroke="' + o.box + '" stroke-width=".8"/>';
  for (let r = 0; r < 5; r++) {
    const col = r === 0 ? (o.headDash || '#777') : (o.dash || '#888');
    for (let c = 0; c < 5; c++) s += rect(1.8 + 8 * c, 2.5 + 6 * r, 4.4, 1, col);
  }
  return s + '</svg>';
}

const sets = { light: [], medium: [], dark: [] };
for (let i = 0; i < 7; i++) sets.light.push(thumb({ top: i ? t40[i] : '#444', under: i ? t40[i] : '#444', bottom: i ? t40[i] : '#444', bands: i ? [t80[i], '', t80[i], ''] : ['#d4d4d4', '', '#d4d4d4', ''] }));
for (let i = 0; i < 7; i++) sets.light.push(thumb({ head: accent[i], headDash: '#fff', box: i ? t40[i] : '#555', hline: i ? t40[i] : '#555' }));
for (let i = 0; i < 7; i++) sets.light.push(thumb({ bands: [t80[i], '', t80[i], ''].map(b => b && (i ? t60[i] : '#9a9a9a')), box: i ? t40[i] : '#333', hline: i ? t40[i] : '#333', vline: i ? t40[i] : '#333' }));
for (let i = 0; i < 7; i++) sets.medium.push(thumb({ head: accent[i], headDash: '#fff', bands: i ? [t80[i], '', t80[i], ''] : ['#bfbfbf', '', '#bfbfbf', ''], hline: i ? t40[i] : '#666', box: i ? t40[i] : '#666' }));
for (let i = 0; i < 7; i++) sets.medium.push(thumb({ head: accent[i], headDash: '#fff', headV: '#fff', bands: i ? [t60[i], t80[i], t60[i], t80[i]] : ['#bfbfbf', '#d9d9d9', '#a6a6a6', '#d9d9d9'], hline: '#ffffff', vline: '#ffffff', vtop: 6, dash: '#666' }));
for (let i = 0; i < 7; i++) sets.medium.push(i
  ? thumb({ head: accent[i], headDash: t80[i], bands: ['#d9d9d9', '', '#d9d9d9', ''], bottom: '#555' })
  : thumb({ head: '#000', headDash: '#fff', bands: ['#bfbfbf', '', '#bfbfbf', ''], hline: '#222', vline: '#222', box: '#222' }));
for (let i = 0; i < 7; i++) sets.medium.push(i
  ? thumb({ head: t60[i], headDash: '#fff', bands: [t60[i], t40[i], t60[i], t40[i]], hline: t80[i], vline: t80[i], box: t60[i], dash: '#666' })
  : thumb({ head: '#b5b5b5', headDash: '#fff', bands: ['#a6a6a6', '#bfbfbf', '#8c8c8c', '#bfbfbf'], hline: '#444', vline: '#444', box: '#333', dash: '#eee' }));
for (let i = 0; i < 7; i++) sets.dark.push(thumb({ head: '#000', headDash: '#ccc', bands: i ? [accent[i], dark[i], accent[i], dark[i]] : ['#595959', '#7f7f7f', '#595959', '#7f7f7f'], dash: '#ddd' }));
[[0, '#000', '#a6a6a6', '#d9d9d9'], [2, accent[2], t60[1], t80[1]], [4, accent[4], t60[3], t80[3]], [6, accent[6], t60[5], t80[5]]].forEach(([i, h, a, b]) => {
  sets.dark.push(thumb({ head: h, headDash: '#eee', bands: [a, b, a, b], dash: '#666' }));
});
Object.keys(sets).forEach(k => { document.getElementById(k).innerHTML = sets[k].join(''); });
</script>
</body>
</html>
